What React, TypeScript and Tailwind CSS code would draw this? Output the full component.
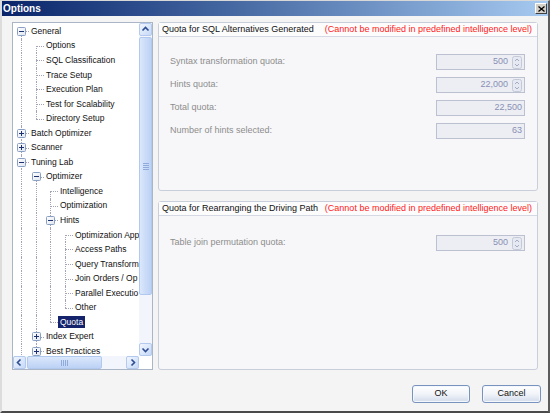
import type { ReactNode } from 'react'

type Row = {
  t: string
  l: number
  e?: '+' | '-'
  first?: boolean
  last?: boolean
  sel?: boolean
  cont: boolean[]
}

const rows: Row[] = [
  { t: 'General', l: 0, e: '-', first: true, cont: [] },
  { t: 'Options', l: 1, first: true, cont: [true] },
  { t: 'SQL Classification', l: 1, cont: [true] },
  { t: 'Trace Setup', l: 1, cont: [true] },
  { t: 'Execution Plan', l: 1, cont: [true] },
  { t: 'Test for Scalability', l: 1, cont: [true] },
  { t: 'Directory Setup', l: 1, last: true, cont: [true] },
  { t: 'Batch Optimizer', l: 0, e: '+', cont: [] },
  { t: 'Scanner', l: 0, e: '+', cont: [] },
  { t: 'Tuning Lab', l: 0, e: '-', cont: [] },
  { t: 'Optimizer', l: 1, e: '-', first: true, cont: [true] },
  { t: 'Intelligence', l: 2, first: true, cont: [true, true] },
  { t: 'Optimization', l: 2, cont: [true, true] },
  { t: 'Hints', l: 2, e: '-', cont: [true, true] },
  { t: 'Optimization App', l: 3, first: true, cont: [true, true, true] },
  { t: 'Access Paths', l: 3, cont: [true, true, true] },
  { t: 'Query Transform', l: 3, cont: [true, true, true] },
  { t: 'Join Orders / Op', l: 3, cont: [true, true, true] },
  { t: 'Parallel Executio', l: 3, cont: [true, true, true] },
  { t: 'Other', l: 3, last: true, cont: [true, true, true] },
  { t: 'Quota', l: 2, last: true, sel: true, cont: [true, true] },
  { t: 'Index Expert', l: 1, e: '+', cont: [true] },
  { t: 'Best Practices', l: 1, e: '+', cont: [true] },
]

// x of the connector column for a tree level, inside the tree's content box
const col = (l: number) => Math.round(8 + l * 14.5)

function Expander({ open }: { open: boolean }) {
  return (
    <svg width="9" height="9" viewBox="0 0 9 9" className="block">
      <defs>
        <linearGradient id="exp" x1="0" y1="0" x2="1" y2="1">
          <stop offset="0" stopColor="#ffffff" />
          <stop offset="1" stopColor="#dfe5ef" />
        </linearGradient>
      </defs>
      <rect x="0.5" y="0.5" width="8" height="8" rx="1" fill="url(#exp)" stroke="#8aa0c2" />
      <path d="M2 4.5h5" stroke="#1d3070" />
      {!open && <path d="M4.5 2v5" stroke="#1d3070" />}
    </svg>
  )
}

function TreeRow({ r }: { r: Row }) {
  const cx = col(r.l)
  return (
    <div className="relative flex h-[14.55px] items-center whitespace-nowrap">
      {r.cont.map((c, i) =>
        c ? (
          <span
            key={i}
            className="absolute top-0 bottom-0 border-l border-dotted border-[#a4a4b4]"
            style={{ left: col(i) }}
          />
        ) : null,
      )}
      <span
        className="absolute border-l border-dotted border-[#a4a4b4]"
        style={{ left: cx, top: r.first ? '50%' : 0, bottom: r.last ? '50%' : 0 }}
      />
      <span className="absolute top-1/2 w-[8px] border-t border-dotted border-[#a4a4b4]" style={{ left: cx }} />
      {r.e && (
        <span className="absolute top-[3px]" style={{ left: cx - 4 }}>
          <Expander open={r.e === '-'} />
        </span>
      )}
      <span style={{ paddingLeft: cx + (r.sel ? 8 : 10) }}>
        {r.sel ? (
          <span className="bg-[#14236b] px-[2px] py-[1px] text-white">{r.t}</span>
        ) : (
          <span className="text-[#111]">{r.t}</span>
        )}
      </span>
    </div>
  )
}

function Chevron({ dir }: { dir: 'up' | 'down' | 'left' | 'right' }) {
  const d = {
    up: 'M2.5 6.5l3-3 3 3',
    down: 'M2.5 4.5l3 3 3-3',
    left: 'M6.5 2.5l-3 3 3 3',
    right: 'M4.5 2.5l3 3-3 3',
  }[dir]
  return (
    <svg width="11" height="11" viewBox="0 0 11 11">
      <path d={d} fill="none" stroke="#2d4d92" strokeWidth="1.6" />
    </svg>
  )
}

function ScrollBtn({ dir }: { dir: 'up' | 'down' | 'left' | 'right' }) {
  return (
    <div className="flex h-[13px] w-[13px] shrink-0 items-center justify-center rounded-[2px] border border-[#b4c9ee] bg-gradient-to-br from-[#f1f6fe] to-[#c6d9f7]">
      <Chevron dir={dir} />
    </div>
  )
}

function VScroll() {
  return (
    <div className="flex w-[13px] shrink-0 flex-col bg-[#f2f6fc]">
      <ScrollBtn dir="up" />
      <div className="mt-[1px] flex h-[258px] items-center justify-center rounded-[2px] border border-[#b1c8ef] bg-gradient-to-r from-[#dbe8fc] via-[#cbdcf8] to-[#bcd2f5]">
        <div className="flex flex-col gap-[1px]">
          <span className="h-[1px] w-[6px] bg-[#8eabdc]" />
          <span className="h-[1px] w-[6px] bg-[#8eabdc]" />
          <span className="h-[1px] w-[6px] bg-[#8eabdc]" />
          <span className="h-[1px] w-[6px] bg-[#8eabdc]" />
        </div>
      </div>
      <div className="flex-1" />
      <ScrollBtn dir="down" />
    </div>
  )
}

function HScroll() {
  return (
    <div className="flex h-[13px] flex-1 bg-[#f2f6fc]">
      <ScrollBtn dir="left" />
      <div className="ml-[1px] flex w-[75px] items-center justify-center rounded-[2px] border border-[#b1c8ef] bg-gradient-to-b from-[#dbe8fc] via-[#cbdcf8] to-[#bcd2f5]">
        <div className="flex gap-[1px]">
          <span className="h-[6px] w-[1px] bg-[#8eabdc]" />
          <span className="h-[6px] w-[1px] bg-[#8eabdc]" />
          <span className="h-[6px] w-[1px] bg-[#8eabdc]" />
          <span className="h-[6px] w-[1px] bg-[#8eabdc]" />
        </div>
      </div>
      <div className="flex-1" />
      <ScrollBtn dir="right" />
    </div>
  )
}

function Spin() {
  return (
    <svg width="10" height="13" viewBox="0 0 10 13" className="ml-[4px] block">
      <rect x="0.5" y="0.5" width="9" height="12" rx="2" fill="#e6e9f1" stroke="#c4c9d8" />
      <path d="M3 5l2-2 2 2M3 8l2 2 2-2" fill="none" stroke="#a3abc6" />
    </svg>
  )
}

function Field({ label, value, spin }: { label: string; value: string; spin?: boolean }) {
  return (
    <div className="flex h-[16px] items-center justify-between">
      <span className="text-[#8d8d8d]">{label}</span>
      <div className="flex h-[16px] w-[89px] items-center justify-end border border-[#bcc1d2] bg-[#eceef4] pr-[2px] text-[#8a8fb3]">
        <span>{value}</span>
        {spin && <Spin />}
      </div>
    </div>
  )
}

function GroupBox({ title, pt, children }: { title: string; pt: string; children: ReactNode }) {
  return (
    <div className="flex flex-1 flex-col rounded-[3px] border border-[#c9cedb] bg-[#f7f7f9]">
      <div className="flex h-[14px] shrink-0 items-center justify-between border-b border-[#d5d9e3] bg-[#fcfcfd] pr-[5px] pl-[3px]">
        <span className="text-[#111]">{title}</span>
        <span className="text-[#ff1a1a]">(Cannot be modified in predefined intelligence level)</span>
      </div>
      <div className={`flex flex-col gap-[7px] pr-[12px] pl-[11px] ${pt}`}>{children}</div>
    </div>
  )
}

function DlgButton({ label, w }: { label: string; w: string }) {
  return (
    <button
      className={`flex h-[18px] items-center justify-center rounded-[3px] border border-[#7893bd] bg-gradient-to-b from-white via-[#f1f4f9] to-[#d3dcec] text-[9px] text-[#111] shadow-[inset_0_0_0_1px_#f4f7fc] ${w}`}
    >
      {label}
    </button>
  )
}

export default function App() {
  return (
    <div className="flex h-[413px] w-[550px] flex-col border-t border-r-2 border-b-2 border-l-2 border-t-[#d8d8d8] border-r-[#5c5c5c] border-b-[#4a4a4a] border-l-[#dcdcdc] bg-[#f4f4f4] font-['Liberation_Sans',Arial,sans-serif] text-[9px]">
      <div className="flex h-[15px] shrink-0 items-center justify-between bg-gradient-to-r from-[#0a246a] to-[#a6caf0] pr-[1px] pl-[1px]">
        <span className="text-[10px] font-bold text-white">Options</span>
        <div className="flex h-[11px] w-[12px] items-center justify-center border border-t-white border-r-[#404040] border-b-[#404040] border-l-white bg-[#d4d0c8]">
          <svg width="7" height="6" viewBox="0 0 7 6">
            <path d="M0.5 0.5l6 5M6.5 0.5l-6 5" stroke="#000" strokeWidth="1.3" />
          </svg>
        </div>
      </div>

      <div className="flex flex-1 flex-col pt-[6px] pr-[10px] pb-[8px] pl-[10px]">
        <div className="flex h-[348px] gap-[5px]">
          <div className="flex w-[141px] shrink-0 flex-col border border-[#aab6c8] bg-white">
            <div className="flex h-[333px]">
              <div className="flex-1 overflow-hidden pt-[1px] text-[8.5px]">
                {rows.map((r) => (
                  <TreeRow key={r.t} r={r} />
                ))}
              </div>
              <VScroll />
            </div>
            <div className="flex h-[13px]">
              <HScroll />
              <div className="w-[13px] bg-white" />
            </div>
          </div>

          <div className="flex flex-1 flex-col gap-[10px]">
            <GroupBox title="Quota for SQL Alternatives Generated" pt="pt-[17px]">
              <Field label="Syntax transformation quota:" value="500" spin />
              <Field label="Hints quota:" value="22,000" spin />
              <Field label="Total quota:" value="22,500" />
              <Field label="Number of hints selected:" value="63" />
            </GroupBox>
            <GroupBox title="Quota for Rearranging the Driving Path" pt="pt-[19px]">
              <Field label="Table join permutation quota:" value="500" spin />
            </GroupBox>
          </div>
        </div>

        <div className="mt-[15px] flex justify-end gap-[12px]">
          <DlgButton label="OK" w="w-[58px]" />
          <DlgButton label="Cancel" w="w-[59px] mr-[-3px]" />
        </div>
      </div>
    </div>
  )
}
